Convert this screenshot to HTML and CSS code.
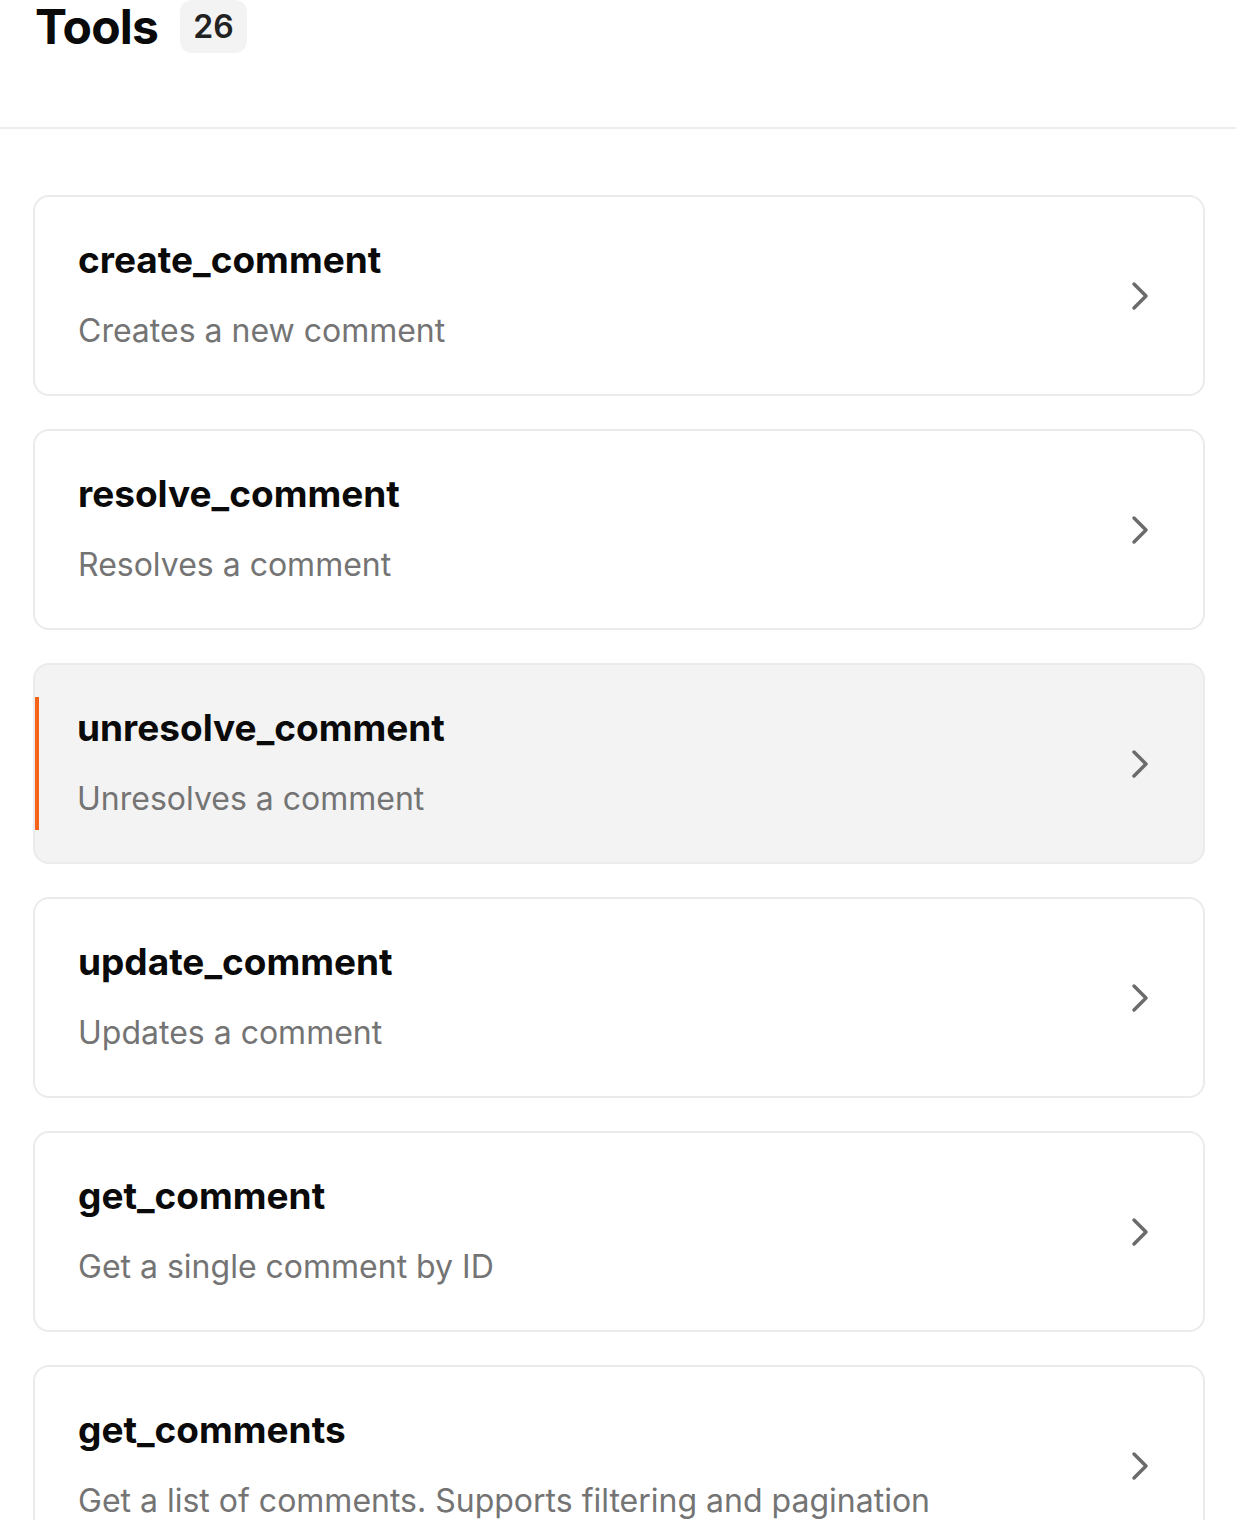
FILE: index.html
```html
<!DOCTYPE html>
<html lang="en">
<head>
<meta charset="utf-8">
<title>Tools</title>
<link rel="stylesheet" href="styles.css">
</head>
<body>
<header class="header">
  <h1 class="title">Tools</h1>
  <span class="count">26</span>
</header>
<main class="list">
  <div class="card">
    <div class="card-text">
      <div class="card-title">create_comment</div>
      <div class="card-desc">Creates a new comment</div>
    </div>
    <svg class="chev" viewBox="0 0 24 24" width="48" height="48"><path d="m9 18 6-6-6-6"/></svg>
  </div>
  <div class="card">
    <div class="card-text">
      <div class="card-title">resolve_comment</div>
      <div class="card-desc">Resolves a comment</div>
    </div>
    <svg class="chev" viewBox="0 0 24 24" width="48" height="48"><path d="m9 18 6-6-6-6"/></svg>
  </div>
  <div class="card card-active">
    <div class="card-text">
      <div class="card-title">unresolve_comment</div>
      <div class="card-desc">Unresolves a comment</div>
    </div>
    <svg class="chev" viewBox="0 0 24 24" width="48" height="48"><path d="m9 18 6-6-6-6"/></svg>
  </div>
  <div class="card">
    <div class="card-text">
      <div class="card-title">update_comment</div>
      <div class="card-desc">Updates a comment</div>
    </div>
    <svg class="chev" viewBox="0 0 24 24" width="48" height="48"><path d="m9 18 6-6-6-6"/></svg>
  </div>
  <div class="card">
    <div class="card-text">
      <div class="card-title">get_comment</div>
      <div class="card-desc">Get a single comment by ID</div>
    </div>
    <svg class="chev" viewBox="0 0 24 24" width="48" height="48"><path d="m9 18 6-6-6-6"/></svg>
  </div>
  <div class="card">
    <div class="card-text">
      <div class="card-title">get_comments</div>
      <div class="card-desc">Get a list of comments. Supports filtering and pagination</div>
    </div>
    <svg class="chev" viewBox="0 0 24 24" width="48" height="48"><path d="m9 18 6-6-6-6"/></svg>
  </div>
</main>
</body>
</html>
```

FILE: styles.css
```css
html, body {
  margin: 0;
  padding: 0;
  background: #ffffff;
}
body {
  font-family: Inter, "Noto Sans", "Liberation Sans", sans-serif;
  color: #0a0a0a;
  overflow: hidden;
}
.header {
  display: flex;
  align-items: flex-start;
  gap: 22px;
  padding: 0 35px;
  height: 127px;
  border-bottom: 2px solid #ececec;
}
.title {
  margin: 0;
  font-size: 48px;
  font-weight: 700;
  line-height: 54px;
  letter-spacing: -0.8px;
}
.count {
  display: inline-flex;
  align-items: center;
  justify-content: center;
  width: 67px;
  height: 53px;
  background: #f3f3f3;
  border-radius: 12px;
  font-size: 32px;
  font-weight: 600;
  color: #222;
}
.list {
  display: flex;
  flex-direction: column;
  gap: 33px;
  padding: 66px 31px 0 33px;
}
.card {
  position: relative;
  box-sizing: border-box;
  height: 201px;
  border: 2px solid #ebebeb;
  border-radius: 16px;
  padding: 0 39px 0 43px;
  display: flex;
  align-items: center;
  justify-content: space-between;
  background: #fff;
}
.card-active {
  background: #f3f3f3;
  padding-left: 42px;
}
.card-active::before {
  content: "";
  position: absolute;
  left: 0;
  top: 32px;
  bottom: 32px;
  width: 4px;
  background: #f46318;
}
.card-text {
  display: flex;
  flex-direction: column;
  gap: 29px;
  margin-top: -3px;
}
.card-title {
  font-size: 37px;
  font-weight: 700;
  line-height: 44px;
}
.card-desc {
  font-size: 32px;
  line-height: 40px;
  color: #747474;
}
.chev {
  flex: none;
  fill: none;
  stroke: #6b6b6b;
  stroke-width: 1.75;
  stroke-linecap: round;
  stroke-linejoin: round;
}
```
